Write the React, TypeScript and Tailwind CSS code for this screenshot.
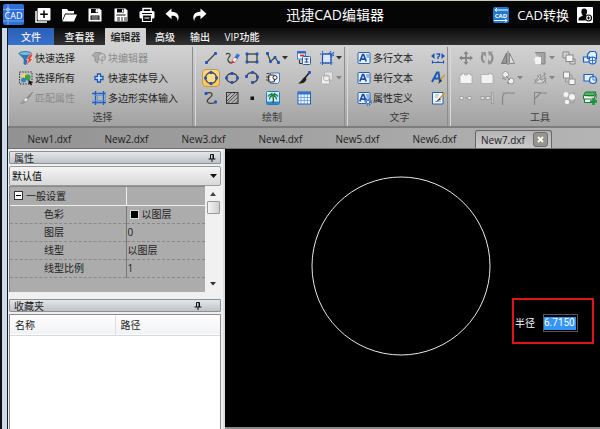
import type { ReactNode } from "react";

const BLUE = "#1d55b8";
const LINE = "#44403a";

function Svg({ children, size = 16 }: { children: ReactNode; size?: number }) {
  return (
    <svg width={size} height={size} viewBox="0 0 16 16" fill="none" aria-hidden="true" className="shrink-0">
      {children}
    </svg>
  );
}

// square grips drawn at the nodes of every draw tool
function Grips({ at }: { at: [number, number][] }) {
  return (
    <>
      {at.map(([x, y]) => (
        <rect key={`${x}-${y}`} x={x - 1.4} y={y - 1.4} width="2.8" height="2.8" rx="0.6" fill={BLUE} />
      ))}
    </>
  );
}

function Caret({ off }: { off?: boolean }) {
  return (
    <svg width="6" height="4" viewBox="0 0 6 4" aria-hidden="true" className="shrink-0">
      <path d="M0 0h6L3 3.5z" fill={off ? "#858585" : "#333"} />
    </svg>
  );
}

function TextGlyph({ gear }: { gear?: boolean }) {
  return (
    <>
      <rect x="2" y="2.5" width="12" height="11" rx="1" fill="#e9f1fc" stroke="#2a63b9" />
      <path d="M3.8 11.5 6.6 4.5h1l2.600 7M5 9.200h4" stroke="#1b4fa6" strokeWidth="1.700" />
      <path d="M10 5h3M10.500 7h2.500" stroke="#3b77cc" />
      {gear && (
        <>
          <circle cx="12" cy="12" r="3" fill="#d8e6f8" stroke="#2a63b9" strokeWidth="1.600" strokeDasharray="1.400 0.950" />
          <circle cx="12" cy="12" r="1.800" fill="#eaf2fc" stroke="#2a63b9" />
        </>
      )}
    </>
  );
}

const icons: Record<string, ReactNode> = {
  quickSelect: (
    <>
      <path d="M1 3.500 6 9v5l3 1V9l4.500-5.500z" fill="#2f78b5" stroke="#1d5b93" strokeWidth="0.600" />
      <ellipse cx="7.200" cy="3.500" rx="6.200" ry="2" fill="#79b7dd" stroke="#286a9f" strokeWidth="0.800" />
      <path d="m12.500 4-4 5.500h2.200L8 15.500 15 9h-2.500L15 4.500z" fill="#ee3b33" stroke="#fff" strokeWidth="0.400" />
    </>
  ),
  selectAll: (
    <>
      <rect x="1.500" y="2" width="12.500" height="12" stroke="#333" strokeDasharray="1.500 1.200" />
      <path d="m3.500 5.500 3-2 3 1.500v3.500l-3 1.500-3-1.500z" fill="#f2d850" />
      <rect x="7" y="4.500" width="5.500" height="6" rx="2" fill="#3ca34a" />
      <circle cx="5.500" cy="10" r="2.500" fill="#347fd0" />
      <path d="m10.500 10 4.500 2.500-2 .5 1 1.800-1.200.7-1-2-1.300 1z" fill="#111" />
    </>
  ),
  matchProps: (
    <>
      <path d="m14.500 1.500-6 6 1.500 2 5-7z" fill="#8b8b8b" />
      <path d="M8 7.500 10 9.500 7.500 12 5.500 10z" fill="#f1f1f1" stroke="#8e8e8e" strokeWidth="0.700" />
      <path d="M5.500 10 7.500 12C6 14 4 14.500 1.500 14 3.500 13 3.500 11 5.500 10z" fill="#999" />
    </>
  ),
  blockEditor: (
    <>
      <path d="M1 5.500 4 2.500h6L8 6l-1.500 7L4 11V7z" fill="#aaa" stroke="#8b8b8b" strokeWidth="0.800" />
      <circle cx="11" cy="7" r="3.500" fill="#ccc" stroke="#969696" />
      <path d="M11 7v7M11 7h3" stroke="#999" />
    </>
  ),
  quickImport: (
    <path d="M6.500 4h3v2.500H12v3H9.500V12h-3V9.500H4v-3h2.500z" fill="#dbe9fb" stroke="#1a58b5" strokeWidth="1.300" />
  ),
  polyImport: (
    <>
      <path d="M4.500 1v14M12.500 1v14M1 3.500h14M1 12.500h14" stroke="#1c5fc0" strokeWidth="1.300" />
      <path d="M6.500 3v11M14.500 2v10M2 10.500h12M3 5.500h9" stroke="#5b98e0" strokeWidth="0.800" />
    </>
  ),
  line: (
    <>
      <path d="m3.500 12.500 9-9" stroke={LINE} strokeWidth="1.300" />
      <Grips at={[[3.5, 12.5], [12.5, 3.5]]} />
    </>
  ),
  freehand: (
    <>
      <path d="M2 4.500C3 3 6.500 3 6 5.500 5.500 7.500 3 8 4 10.500c.5 1.500 2 2.500 4 2.500" stroke={LINE} strokeWidth="1.200" />
      <path d="m8 10.500 3-3.500 2.500 1.500-2.500 4z" fill="#f4f7fb" stroke="#d06a6a" strokeWidth="0.700" />
      <path d="m10.500 7.500 2.500-4 3 1.500-2.500 4z" fill="#2c78dc" />
      <path d="m8 10.500 3 2-4 1.300z" fill="#d33" />
    </>
  ),
  rect: (
    <>
      <rect x="3" y="4" width="10" height="8" stroke={LINE} strokeWidth="1.300" />
      <Grips at={[[3, 4], [13, 4], [3, 12], [13, 12]]} />
    </>
  ),
  polyline: (
    <>
      <path d="m2.500 3.500 3 8 4.500-4 3.500 5" stroke={LINE} strokeWidth="1.200" />
      <Grips at={[[2.5, 3.5], [5.5, 11.5], [10, 7.5], [13.5, 12.5]]} />
    </>
  ),
  insertBlock: (
    <>
      <rect x="1.500" y="1.500" width="8" height="7.500" fill="#f2f7fe" stroke="#3f7fd0" />
      <path d="M1.500 2.500h8" stroke="#2a63b9" strokeWidth="2" />
      <path d="M4 5.500h4.500" stroke="#d33" strokeWidth="1.800" />
      <rect x="6.500" y="6.500" width="8" height="8" rx="1" fill="#eef4fd" stroke="#2c5da3" />
      <path d="M8.500 9h4M8.500 12h4M10.500 8v5" stroke="#2a63b9" strokeWidth="1.200" />
      <path d="M3.500 10v3.500H6" stroke="#333" />
    </>
  ),
  region: (
    <>
      <rect x="3.500" y="4" width="8.500" height="9" fill="#dbe7f7" stroke={BLUE} strokeWidth="1.200" />
      <path d="M1 4h14M3.500 1v14M1 13h13M12 4v11" stroke={BLUE} strokeDasharray="1.500 1" />
      <path d="M11 5.500 15 2M10 4l2-3M12 6l3-.500" stroke={BLUE} />
    </>
  ),
  circle: (
    <>
      <circle cx="8" cy="8" r="5.500" fill="#fbdc8b" stroke={LINE} strokeWidth="1.300" />
      <Grips at={[[8, 2.5], [2.5, 8], [13.5, 8], [8, 13.5]]} />
    </>
  ),
  ellipse: (
    <>
      <ellipse cx="8" cy="8" rx="5.500" ry="4.500" stroke={LINE} strokeWidth="1.300" />
      <Grips at={[[8, 3.5], [2.5, 8], [13.5, 8], [8, 12.5]]} />
    </>
  ),
  arc: (
    <>
      <path d="M2.500 6.500C4 1.500 12.500 1 13.500 7c.300 3-2 5-5 5.500" stroke={LINE} strokeWidth="1.300" />
      <Grips at={[[2.5, 6.5], [8.5, 2.5], [13.5, 7], [8.5, 12.5]]} />
    </>
  ),
  copyShape: (
    <>
      <path d="M5.500 3h9v8.500l-2 2h-7z" fill="#e8effa" stroke="#4c79b5" />
      <rect x="3.500" y="5" width="6" height="7" rx="1.500" fill="#f2f2f2" stroke="#333" strokeWidth="1.200" />
      <circle cx="10" cy="7.500" r="2" fill="#fff" stroke="#333" />
      <path d="M1.500 3.500h3M1 7h4M1 10h4" stroke="#444" />
    </>
  ),
  brush: (
    <>
      <path d="M13.500 2.500 8 9" stroke="#222" strokeWidth="1.600" />
      <path d="M9.500 7.500C6.500 7 6.500 11 2 13.500c4 .500 8-1 8.500-4.500z" fill="#222" />
      <Grips at={[[13.5, 2.5]]} />
    </>
  ),
  cloneOff: (
    <>
      <rect x="5.500" y="2" width="8" height="8" rx="1" fill="#e2e2e2" stroke="#b5b5b5" />
      <rect x="2.500" y="6" width="8" height="8" rx="1" fill="#f1f1f1" stroke="#b0b0b0" />
      <circle cx="7.500" cy="8" r="3" stroke="#b0b0b0" />
    </>
  ),
  spline: (
    <>
      <path d="M3 3.500c3.500-2 7.500-.5 5.500 2.500C7 8.500 3 9 4.500 12c1.500 2.500 5 1.500 8 .5" stroke={LINE} strokeWidth="1.300" />
      <Grips at={[[3, 3.5], [12.5, 12]]} />
    </>
  ),
  hatch: (
    <>
      <rect x="2.500" y="2.500" width="11.500" height="11" fill="#b2b2b2" stroke="#333" />
      <path d="m3 7 4-4M3 11l8-8M3 13.500 14 3M7 13.500l7-6.500M11 13.500l3-3" stroke="#444" strokeWidth="0.900" />
    </>
  ),
  point: <rect x="6.500" y="6.500" width="3.500" height="3.500" fill="#111" />,
  picture: (
    <>
      <rect x="1.500" y="1.500" width="13" height="13" rx="1" fill="#cdeef8" stroke="#2e78b8" />
      <path d="M2 11.500h12V14H2z" fill="#2788cc" />
      <path d="M8 6.500c.8 2 .6 4 0 6.500" stroke="#3d4a26" strokeWidth="1.300" />
      <path d="M8 6C6.500 4 4.500 4 3 6.500M8 6c-2-.3-3.500 1-3.500 3.500M8 6c1.500-2 3.500-2 5 .5M8 6c2-.3 3.500 1 3.500 3.500M8 6 6.500 3M8 6l2-3" stroke="#14804a" strokeWidth="1.400" />
    </>
  ),
  table: (
    <>
      <rect x="2" y="2" width="12.500" height="12" fill="#f4f9ff" stroke="#1f5fbd" />
      <path d="M2 2h12.500v2.500H2z" fill="#2e75d2" />
      <path d="M5 4v10M8.200 4v10M11.400 4v10M2 7.500h12M2 10.500h12" stroke="#5b98e0" strokeWidth="0.800" />
    </>
  ),
  textMulti: <TextGlyph />,
  textAttr: <TextGlyph gear />,
  spacing: (
    <>
      <path d="M4.500 3 1 6l3.500 3zM11.500 3 15 6l-3.500 3z" fill={BLUE} />
      <path d="M6.500 4h3v2L8 7v2" stroke={BLUE} strokeWidth="1.400" />
      <path d="M2 12.500h12M2.500 10.500v3M13.500 10.500v3M8 11v2" stroke={BLUE} strokeWidth="1.200" />
    </>
  ),
  textStyle: (
    <>
      <path d="M2 12 7 2.500h1.500L10 12M4 8.500h5" stroke="#1b5bb5" strokeWidth="2" />
      <path d="m14.500 5-4 5" stroke="#d69a35" strokeWidth="1.800" />
      <path d="M10.500 9 8 14l4-3z" fill="#333" />
    </>
  ),
  textEdit: (
    <>
      <path d="M2.500 2.500H13v11.500H2.500z" fill="#f5f9fe" stroke="#2461aa" />
      <path d="M5 5h4M5 7h3M5 11.500h6" stroke="#8eb4dc" />
      <path d="m15 2.500-5 6" stroke="#d69a35" strokeWidth="1.800" />
      <path d="M9.500 8 6 12l5-2.500z" fill="#333" />
    </>
  ),
  move: (
    <>
      <path d="M8 3v10M3 8h10" stroke="#858585" strokeWidth="1.800" />
      <path d="m8 1 2.500 3h-5zM8 15l2.500-3h-5zM1 8l3-2.500v5zM15 8l-3-2.500v5z" fill="#858585" />
    </>
  ),
  rotate: (
    <>
      <path d="M5 3C2 5 2 10.500 5.500 12.500M10.500 13c3.500-1.500 4-7 1-9.500" stroke="#8b8b8b" strokeWidth="2" />
      <path d="M1.500 2h5.500v5zM9 14.500V9l4 5zM9 1.500h5L10 6z" fill="#969696" />
    </>
  ),
  mirror: (
    <>
      <path d="M6.500 3v10.500H1.500z" fill="#969696" stroke="#777" />
      <path d="M9.500 3v10.500h5z" fill="#ddd" stroke="#888" />
      <path d="M8 1v14" stroke="#777" />
    </>
  ),
  scale: (
    <>
      <path d="M3 2.500h10V14H9" fill="#a2a2a2" stroke="#858585" />
      <rect x="3" y="7" width="6" height="7" rx="1" fill="#f4f4f4" />
      <path d="M6 5.500v2M1.500 10h2M2.500 7l1.500 1.500M9 7 7.500 8.500" stroke="#eee" />
    </>
  ),
  group: (
    <>
      <path d="M2 2h6v6H2zM9 9h5v5H9z" fill="#d8d8d8" stroke="#858585" />
      <rect x="5" y="5" width="7" height="6.500" fill="#f5f5f5" stroke="#858585" />
    </>
  ),
  ungroup: (
    <>
      <path d="M2.500 2h6v6h-6zM8 9h6v5.500H8z" fill="#f5f5f5" stroke="#8b8b8b" />
      <path d="M9 5h2v3M4.500 9v3H7" stroke="#999" />
    </>
  ),
  orderFront: (
    <>
      <path d="M5.500 4.500 8 1.500h5l1.500 2v5H5.500zM1.500 7h6v5h-6z" fill="#e6f0fc" stroke="#1e60c4" strokeWidth="1.200" />
      <circle cx="10.500" cy="10.500" r="3.500" fill="#e7effc" stroke="#1e60c4" strokeWidth="1.200" />
      <path d="M10.500 7v7M8 10.500h5" stroke="#1e60c4" strokeWidth="0.800" />
    </>
  ),
  orderBack: (
    <>
      <path d="M2 4.500h9V11H2z" fill="#e6f0fc" stroke="#1e60c4" strokeWidth="1.200" />
      <circle cx="11" cy="10" r="3.500" fill="#e7effc" stroke="#1e60c4" strokeWidth="1.200" />
      <path d="M11 6.500V10h3" stroke="#1e60c4" strokeWidth="0.800" />
    </>
  ),
  chamferBox: (
    <path d="M2 5h2V3.500h2.500V5h3V3.500H12V5h2v8.500H2z" fill="#f4f4f4" stroke="#a5a5a5" strokeWidth="0.700" />
  ),
  filletBox: (
    <path d="M2 4.500h8V3.500h2.500v1H14v9H2z" fill="#f1f1f1" stroke="#a5a5a5" strokeWidth="0.700" />
  ),
  chain: (
    <>
      <circle cx="5.500" cy="4.500" r="3" fill="#f0f0f0" stroke="#999" />
      <circle cx="11" cy="11" r="3" fill="#f0f0f0" stroke="#999" />
      <path d="m6 6 4 4M2 8l4 1.500M7 12l2 2" stroke="#888" />
    </>
  ),
  explode: (
    <>
      <path d="m3 12 5-8 1 6 5-2-3 5H5z" fill="#ddd" stroke="#888" strokeWidth="0.800" />
      <path d="m2 14 12-11M12 2l2 12M5 5l7 8M2 10h5" stroke="#8b8b8b" strokeWidth="0.800" />
    </>
  ),
  array: (
    <>
      <path d="M2 6.500h3v3H2zM10 6.500h3v3h-3z" fill="#f2f2f2" stroke="#8e8e8e" strokeWidth="0.700" />
      <path d="M7 8h2" stroke="#999" />
    </>
  ),
  align: (
    <path d="M2 6.500h3v3H2zM7 6.500h4v3H7zM12.500 2.500h1.500v11h-1.500z" fill="#e5e5e5" stroke="#8a8a8a" strokeWidth="0.700" />
  ),
  fillet: (
    <>
      <path d="M2.500 15V8c0-3 2-5 5-5H15" stroke="#858585" strokeWidth="1.200" />
      <path d="M2.500 6V2.500H7" stroke="#999" strokeDasharray="1 1" />
    </>
  ),
  chamfer: (
    <>
      <path d="M2.500 15V9l6-6H15" stroke="#858585" strokeWidth="1.200" />
      <path d="M2.500 8V2.500H9" stroke="#858585" />
    </>
  ),
  bubbles: (
    <>
      <circle cx="5" cy="4.500" r="3" fill="#f4f4f4" stroke="#aaa" strokeWidth="0.700" />
      <circle cx="11" cy="7" r="3.500" fill="#f4f4f4" stroke="#999" strokeWidth="0.700" />
      <circle cx="6" cy="12" r="2.700" fill="#f4f4f4" stroke="#999" strokeWidth="0.700" />
      <path d="M9 12.500 12 13l2-3M12 2l2 2" stroke="#999" />
    </>
  ),
  layerAdd: (
    <>
      <path d="M3.500 2h10.500L12 5.500H1.500z" fill="#4fb760" stroke="#187a35" />
      <path d="M1.500 6v3h10.500l2-5v4M2.500 9v3.500H11l3-4" fill="#f4fbf5" stroke="#187a35" />
      <path d="M11.500 8v7M8 11.500h7" stroke="#16963a" strokeWidth="2.400" />
    </>
  ),
};

type Tool = { icon: string; name: string; caret?: boolean; on?: boolean; off?: boolean };

const drawTools: Tool[] = [
  { icon: "line", name: "直线" },
  { icon: "freehand", name: "手绘" },
  { icon: "rect", name: "矩形" },
  { icon: "polyline", name: "多段线", caret: true },
  { icon: "insertBlock", name: "插入块" },
  { icon: "region", name: "面域", caret: true },
  { icon: "circle", name: "圆", on: true },
  { icon: "ellipse", name: "椭圆" },
  { icon: "arc", name: "圆弧" },
  { icon: "copyShape", name: "复制" },
  { icon: "brush", name: "画笔" },
  { icon: "cloneOff", name: "克隆", caret: true, off: true },
  { icon: "spline", name: "样条" },
  { icon: "hatch", name: "填充" },
  { icon: "point", name: "点" },
  { icon: "picture", name: "图片" },
  { icon: "table", name: "表格" },
];

const editTools: Tool[] = [
  { icon: "move", name: "移动" },
  { icon: "rotate", name: "旋转" },
  { icon: "mirror", name: "镜像" },
  { icon: "scale", name: "缩放", caret: true, off: true },
  { icon: "group", name: "组合" },
  { icon: "orderFront", name: "置前" },
  { icon: "chamferBox", name: "打断" },
  { icon: "filletBox", name: "合并" },
  { icon: "chain", name: "链接", caret: true, off: true },
  { icon: "explode", name: "分解", caret: true, off: true },
  { icon: "ungroup", name: "取消组合" },
  { icon: "orderBack", name: "置后" },
  { icon: "array", name: "阵列" },
  { icon: "align", name: "对齐" },
  { icon: "fillet", name: "圆角" },
  { icon: "chamfer", name: "倒角" },
  { icon: "bubbles", name: "多点" },
  { icon: "layerAdd", name: "添加图层" },
];

function ToolButton({ tool }: { tool: Tool }) {
  return (
    <button type="button" aria-label={tool.name} disabled={tool.off} className="flex h-5 items-center">
      <span
        className={
          tool.on
            ? "flex h-[18px] w-[18px] items-center justify-center rounded-sm border border-[#c39a4d] bg-linear-to-b from-[#fbd68c] to-[#fdc55a]"
            : "flex h-[18px] w-[18px] items-center justify-center"
        }
      >
        <Svg>{icons[tool.icon]}</Svg>
      </span>
      {tool.caret && <Caret off={tool.off} />}
    </button>
  );
}

function LabelButton({ icon, label, off }: { icon: string; label: string; off?: boolean }) {
  return (
    <button
      type="button"
      disabled={off}
      className={`flex h-5 items-center gap-px whitespace-nowrap ${off ? "text-[#8b8b8b]" : "text-[#1c1c1c]"}`}
    >
      <Svg>{icons[icon]}</Svg>
      {label}
    </button>
  );
}

function Group({ title, className, children }: { title: string; className: string; children: ReactNode }) {
  return (
    <section className={`flex shrink-0 flex-col border-r border-l border-r-[#8c8c8c] border-l-[#dadada] pt-px ${className}`}>
      {children}
      <h2 className="pl-1 text-center leading-[18px] text-[#3c3c3c]">{title}</h2>
    </section>
  );
}

function Pin() {
  return (
    <svg width="8" height="8" viewBox="0 0 8 8" fill="none" aria-hidden="true">
      <path d="M2.500 5V.500h3V5M.500 5h7M4 5v3M5 1v4" stroke="#111" />
    </svg>
  );
}

function PanelHeader({ title, pin }: { title: string; pin: string }) {
  return (
    <div className={`flex h-[13px] items-center justify-between rounded-[1px] border border-[#8b9097] bg-linear-to-b from-[#e4e6e8] to-[#bfc4ca] pl-1 ${pin}`}>
      <h2 className="leading-none">{title}</h2>
      <button type="button" aria-label="固定">
        <Pin />
      </button>
    </div>
  );
}

function TitleBar() {
  return (
    <header className="flex h-7 items-center border-t border-[#c9cdb9] bg-[#050505] pr-[7px] pl-[3px] text-white">
      <svg width="21" height="21" viewBox="0 0 21 21" aria-hidden="true" className="shrink-0">
        <rect width="21" height="21" rx="2" fill="#2f6fd8" />
        <path d="M5 0v21M0 5.500h21M0 17h21" stroke="#8ab6f5" strokeWidth="0.800" />
        <circle cx="5" cy="5.500" r="1.500" fill="none" stroke="#cfe2ff" strokeWidth="0.800" />
        <text x="10.500" y="15" textAnchor="middle" fontSize="9" fill="#fff">CAD</text>
      </svg>
      <nav className="ml-[11px] flex items-center gap-[10px]">
        <button type="button" aria-label="新建">
          <Svg>
            <path d="M1 4v11h11" stroke="#fff" strokeWidth="1.500" />
            <rect x="2.500" y="1" width="13" height="12.500" rx="1" fill="#fff" />
            <path d="M9 3.500v7.500M5.200 7.200h7.600" stroke="#000" strokeWidth="1.500" />
          </Svg>
        </button>
        <button type="button" aria-label="打开">
          <Svg>
            <path d="M1 14V2h5l1.500 2H13v2.500H4z" fill="#fff" />
            <path d="M4.500 7.500H16L13 14.500H1.500z" fill="#fff" />
          </Svg>
        </button>
        <button type="button" aria-label="保存">
          <Svg>
            <path d="M1.500 1.500h11l2 2v11h-13z" fill="#fff" />
            <path d="M4 2h7v4H4zM3.500 8.500h9V13h-9z" fill="#0a0a0a" />
            <path d="M9 2.500h1.500V5H9zM4.500 10h7M4.500 12h7" fill="#fff" stroke="#fff" strokeWidth="0.800" />
          </Svg>
        </button>
        <button type="button" aria-label="另存为">
          <Svg>
            <path d="M1.500 1.500h11l2 2v11h-13z" fill="#fff" />
            <path d="M4 2h7v3.500H4zM3.500 7.500h9v1h-9z" fill="#0a0a0a" />
            <path d="M9 2.500h1.500V5H9z" fill="#fff" />
            <path d="M4 11h3M8 11h2M11 11h3M4 13h3M8 13h2M11 13h3" stroke="#222" />
          </Svg>
        </button>
        <button type="button" aria-label="打印">
          <Svg>
            <path d="M4 4V1.500h8V4" stroke="#fff" strokeWidth="1.400" />
            <rect x="0.500" y="4" width="15" height="7.500" rx="1.500" fill="#fff" />
            <path d="M3 6.500h10M4 9h8v5H4z" fill="#0a0a0a" stroke="#0a0a0a" />
            <path d="M3.500 9v5.500h9V9M5.500 11h5" stroke="#fff" strokeWidth="1.200" />
          </Svg>
        </button>
        <button type="button" aria-label="撤销">
          <Svg>
            <path d="M6.500 1.500v3.300c6 0 9 4 6 9.700.500-4-2-6-6-5.700v3.400L.500 6.800z" fill="#fff" />
          </Svg>
        </button>
        <button type="button" aria-label="重做">
          <Svg>
            <path d="M9.500 1.500v3.300c-6 0-9 4-6 9.700-.500-4 2-6 6-5.700v3.400l6-5.400z" fill="#fff" />
          </Svg>
        </button>
      </nav>
      <h1 className="flex-1 pr-[30px] text-center text-[14px] leading-5">迅捷CAD编辑器</h1>
      <button type="button" className="flex items-center gap-2 text-[13px] leading-5">
        <svg width="16" height="16" viewBox="0 0 16 16" fill="none" aria-hidden="true">
          <rect width="16" height="16" rx="2" fill="#2179cf" />
          <path d="M15 3H2M4 1 2 3l2 1.500M1 13.500h13M12 12l2 1.500-2 2" stroke="#fff" />
          <text x="8" y="10.500" textAnchor="middle" fontSize="6" fontWeight="700" fill="#fff">CAD</text>
        </svg>
        CAD转换
      </button>
      <button type="button" aria-label="用户" className="ml-2">
        <svg width="16" height="16" viewBox="0 0 16 16" fill="none" aria-hidden="true">
          <rect width="16" height="16" rx="1" fill="#fff" />
          <path d="M7 1.500c2.500 0 3.500 2 3 4-.300 1.500-1 2-1 3l.500 1.500-1 3.500h-7c0-3 1-3.500 4-4.500V8C4 6.500 3.500 1.500 7 1.500z" fill="#080808" />
          <circle cx="11.500" cy="11" r="3" fill="#fff" stroke="#080808" strokeWidth="1.200" />
          <path d="M11.500 9.500v3M10 11h3" stroke="#080808" />
        </svg>
      </button>
    </header>
  );
}

function MenuTabs() {
  return (
    <nav className="flex h-[17px] bg-linear-to-b from-[#0c0c0c] to-[#343434] font-medium text-[#f0f0f0]">
      <button type="button" className="w-[46px] bg-linear-to-b from-[#2a5fb4] to-[#3672cb]">文件</button>
      <button type="button" className="w-[51px]">查看器</button>
      <button type="button" className="w-[41px] rounded-t-[1px] bg-[#d2d2d2] text-[#111]">编辑器</button>
      <button type="button" className="w-[38px]">高级</button>
      <button type="button" className="w-8">输出</button>
      <button type="button" className="w-[52px]">VIP功能</button>
    </nav>
  );
}

function Ribbon() {
  return (
    <div className="flex h-[81px] gap-0.5 overflow-hidden bg-linear-to-b from-[#d2d2d2] via-[#bdbdbd] to-[#a2a2a2] pt-0.5">
      <Group title="选择" className="w-[185px]">
        <div className="grid grid-cols-[73px_1fr] pl-[9px]">
          <LabelButton icon="quickSelect" label="快速选择" />
          <LabelButton icon="blockEditor" label="块编辑器" off />
          <LabelButton icon="selectAll" label="选择所有" />
          <LabelButton icon="quickImport" label="快速实体导入" />
          <LabelButton icon="matchProps" label="匹配属性" off />
          <LabelButton icon="polyImport" label="多边形实体输入" />
        </div>
      </Group>
      <Group title="绘制" className="w-[150px]">
        <div className="grid grid-cols-[21px_20px_21px_31px_23px_28px] pl-1.5">
          {drawTools.map((t) => (
            <ToolButton key={t.icon} tool={t} />
          ))}
        </div>
      </Group>
      <Group title="文字" className="w-[101px]">
        <div className="grid grid-cols-[73px_20px] pl-2">
          <LabelButton icon="textMulti" label="多行文本" />
          <ToolButton tool={{ icon: "spacing", name: "文字间距" }} />
          <LabelButton icon="textMulti" label="单行文本" />
          <ToolButton tool={{ icon: "textStyle", name: "文字样式" }} />
          <LabelButton icon="textAttr" label="属性定义" />
          <ToolButton tool={{ icon: "textEdit", name: "编辑文字" }} />
        </div>
      </Group>
      <Group title="工具" className="w-[176px]">
        <div className="grid grid-cols-[21px_21px_32px_29px_21px_21px] pl-1.5">
          {editTools.map((t) => (
            <ToolButton key={t.icon} tool={t} />
          ))}
        </div>
      </Group>
    </div>
  );
}

function FileTabs() {
  const files = ["New1.dxf", "New2.dxf", "New3.dxf", "New4.dxf", "New5.dxf", "New6.dxf"];
  return (
    <div className="flex h-[23px] items-end border-t-2 border-b border-t-[#7d7d7d] border-b-[#707070] bg-linear-to-r from-[#929292] to-[#b4b4b4] pl-[3px] text-[#1d1d1d]">
      {files.map((f) => (
        <button key={f} type="button" className="h-[18px] w-[77px] leading-[18px]">
          {f}
        </button>
      ))}
      <div className="ml-0.5 flex h-[18px] items-center gap-2 rounded-t-[3px] border border-b-0 border-[#666] bg-linear-to-b from-[#b5b5b5] to-[#cbcbcb] pr-[3px] pl-[5px]">
        <button type="button" className="leading-4">New7.dxf</button>
        <button type="button" aria-label="关闭" className="flex h-[15px] w-[15px] items-center justify-center rounded-[3px] border border-[#6f6f6f] bg-[#969690]">
          <svg width="7" height="7" viewBox="0 0 7 7" aria-hidden="true">
            <path d="m1 1 5 5M6 1 1 6" stroke="#fffbe8" strokeWidth="1.800" />
          </svg>
        </button>
      </div>
    </div>
  );
}

const props = [
  { name: "色彩", value: "以图层", swatch: true },
  { name: "图层", value: "0" },
  { name: "线型", value: "以图层" },
  { name: "线型比例", value: "1" },
];

function Sidebar() {
  return (
    <aside className="flex w-[217px] shrink-0 flex-col border-r-2 border-[#dedede] bg-[#f0f0f0] pt-0.5 pr-0.5 pl-px text-[#222]">
      <PanelHeader title="属性" pin="pr-1" />
      <div className="relative mt-0.5 flex">
        <select aria-label="选择集" className="h-5 w-full appearance-none rounded-[2px] border border-[#9a9a9a] bg-linear-to-b from-[#f4f4f4] to-[#d9d9d9] pl-0.5 text-black">
          <option>默认值</option>
        </select>
        <svg width="7" height="4" viewBox="0 0 7 4" aria-hidden="true" className="pointer-events-none absolute top-2 right-1">
          <path d="M0 0h7L3.500 4z" fill="#111" />
        </svg>
      </div>
      <div className="flex h-[106px]">
        <div className="flex-1 border-t border-l border-[#888] bg-[#acacac]">
          <table className="w-full table-fixed border-collapse">
            <thead>
              <tr className="h-[18px] border-b border-[#efefef]">
                <th className="w-[116px] border-r border-[#efefef] p-0 font-normal">
                  <span className="flex items-center gap-[3px] pl-1">
                    <button type="button" aria-label="折叠" className="flex h-[9px] w-[9px] items-center justify-center border border-[#333] bg-white">
                      <span className="h-px w-[5px] bg-black" />
                    </button>
                    一般设置
                  </span>
                </th>
                <td className="p-0" />
              </tr>
            </thead>
            <tbody>
              {props.map((p) => (
                <tr key={p.name} className="h-[18px] border-b border-dashed border-[#8a8a8a]">
                  <th className="border-r border-solid border-[#777] p-0 pl-[34px] text-left font-normal">{p.name}</th>
                  <td className="p-0 pl-px">
                    <span className="flex items-center gap-[3px]">
                      {p.swatch && <span className="ml-0.5 h-[9px] w-[9px] border border-[#ddd] bg-black" />}
                      {p.value}
                    </span>
                  </td>
                </tr>
              ))}
            </tbody>
          </table>
        </div>
        <div className="flex w-4 flex-col items-center bg-[#f1f1f1] py-[6px]">
          <svg width="6" height="4" viewBox="0 0 6 4" aria-hidden="true">
            <path d="M0 4h6L3 0z" fill="#444" />
          </svg>
          <div className="mt-[5px] h-[13px] w-[13px] rounded-[1px] border border-[#999] bg-linear-to-r from-[#f4f4f4] to-[#cfcfcf]" />
          <div className="mt-auto">
            <Caret />
          </div>
        </div>
      </div>
      <div className="mt-[7px]">
        <PanelHeader title="收藏夹" pin="pr-[18px]" />
      </div>
      <div className="mt-0.5 flex-1 border border-b-0 border-[#8e8e8e] bg-white">
        <table className="w-full table-fixed border-collapse">
          <thead>
            <tr className="h-5 border-b border-[#d5d8dc] bg-linear-to-b from-white to-[#f1f2f4]">
              <th className="w-[105px] border-r border-[#dcdfe3] p-0 pl-[5px] text-left font-normal">名称</th>
              <th className="p-0 pl-[5px] text-left font-normal">路径</th>
            </tr>
          </thead>
        </table>
      </div>
    </aside>
  );
}

function Canvas() {
  return (
    <main className="relative flex-1 overflow-hidden border-b-2 border-[#8a8a8a] bg-black">
      <svg width="180" height="180" viewBox="0 0 180 180" fill="none" aria-hidden="true" className="absolute top-[27px] left-[86px]">
        <circle cx="90" cy="90" r="89" stroke="#e8e8e8" />
      </svg>
      <div className="absolute top-[149px] left-[287px] flex h-[46px] w-[82px] items-center border-2 border-[#e0131b] pt-1 pl-px text-white">
        <label htmlFor="radius" className="w-7">半径</label>
        <div className="flex h-[18px] w-[35px] items-center border border-[#555]">
          <input
            id="radius"
            defaultValue="6.7150"
            className="h-[13px] w-8 bg-[#3495fb] font-[Roboto,sans-serif] text-[10px] text-white outline-none"
          />
        </div>
      </div>
    </main>
  );
}

export default function App() {
  return (
    <div className="flex h-screen flex-col overflow-hidden bg-black font-['Open_Sans','Noto_Sans_CJK_SC',sans-serif] text-[10px] leading-4">
      <TitleBar />
      <div className="flex min-h-0 flex-1">
        <div className="w-2 shrink-0 border-r border-l-2 border-r-[#15181d] border-l-[#111] bg-[#cbd9ea]" />
        <div className="flex min-w-0 flex-1 flex-col">
          <MenuTabs />
          <Ribbon />
          <FileTabs />
          <div className="flex min-h-0 flex-1">
            <Sidebar />
            <Canvas />
          </div>
        </div>
      </div>
    </div>
  );
}
